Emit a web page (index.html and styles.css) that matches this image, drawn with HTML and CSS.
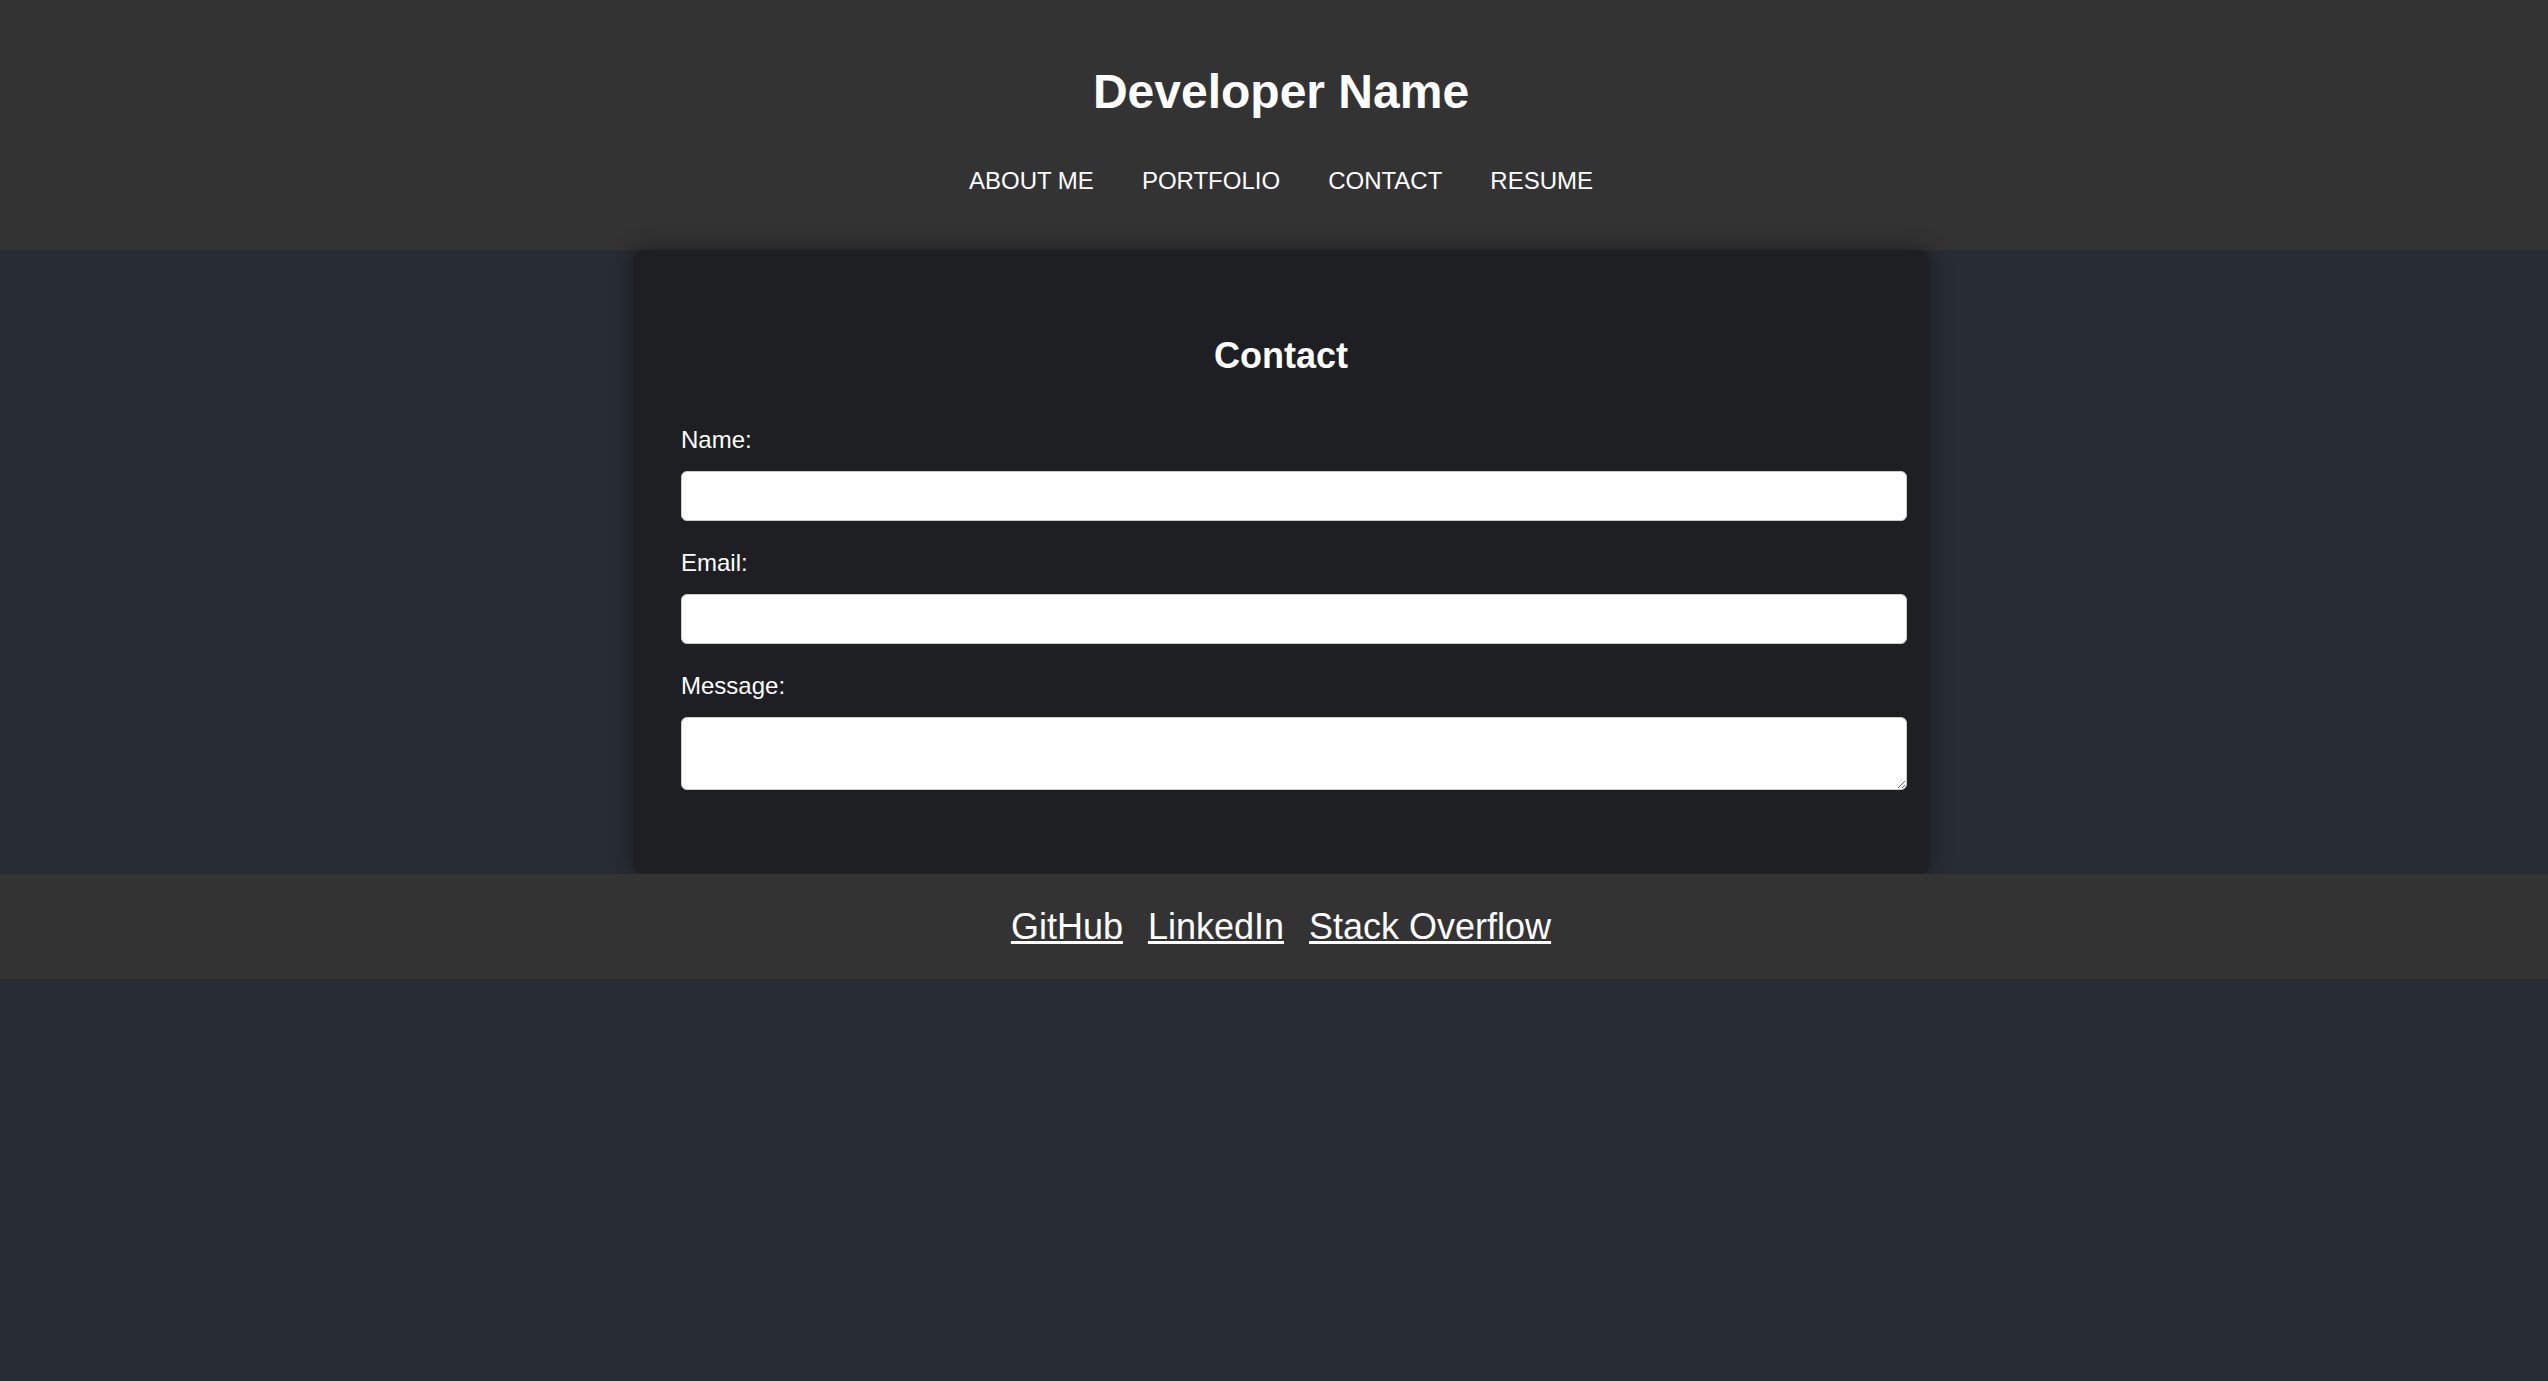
FILE: index.html
```html
<!DOCTYPE html>
<html lang="en">
<head>
<meta charset="utf-8">
<title>Developer Name</title>
<link rel="stylesheet" href="styles.css">
</head>
<body>
<header class="site-header">
  <h1 class="site-title">Developer Name</h1>
  <nav class="site-nav">
    <a href="#" class="nav-link">ABOUT ME</a>
    <a href="#" class="nav-link">PORTFOLIO</a>
    <a href="#" class="nav-link">CONTACT</a>
    <a href="#" class="nav-link">RESUME</a>
  </nav>
</header>
<main class="site-main">
  <section class="card">
    <h2 class="card-title">Contact</h2>
    <form class="contact-form">
      <label class="field-label" for="name">Name:</label>
      <input class="field-input" type="text" id="name">
      <label class="field-label" for="email">Email:</label>
      <input class="field-input" type="email" id="email">
      <label class="field-label" for="message">Message:</label>
      <textarea class="field-input field-textarea" id="message"></textarea>
    </form>
  </section>
</main>
<footer class="site-footer">
  <a href="#" class="footer-link">GitHub</a>
  <a href="#" class="footer-link">LinkedIn</a>
  <a href="#" class="footer-link">Stack Overflow</a>
</footer>
</body>
</html>
```
FILE: styles.css
```css
html, body {
  margin: 0;
  padding: 0;
}
body {
  background: #282c34;
  color: #ffffff;
  font-family: "Liberation Sans", Arial, sans-serif;
  min-height: 100vh;
}
.site-header {
  background: #333333;
  padding: 64px 0 55px 14px;
  text-align: center;
}
.site-title {
  margin: 0 0 48px;
  font-size: 48px;
  font-weight: bold;
  line-height: normal;
}
.site-nav {
  display: flex;
  justify-content: center;
  font-size: 24px;
}
.nav-link {
  color: #ffffff;
  text-decoration: none;
  padding: 0 24px;
}
.site-main {
  padding-left: 14px;
}
.card {
  position: relative;
  width: 1200px;
  margin: 0 auto;
  padding: 85px 48px 84px;
  background: #1e1f22;
  border-radius: 10px;
  box-shadow: 0 0 22px rgba(0, 0, 0, 0.45);
}
.card-title {
  margin: 0 0 49px;
  text-align: center;
  font-size: 36px;
  font-weight: bold;
  line-height: normal;
}
.contact-form {
  display: flex;
  flex-direction: column;
  align-items: flex-start;
}
.field-label {
  display: block;
  font-size: 24px;
  margin-bottom: 17px;
}
.field-input {
  display: block;
  box-sizing: content-box;
  width: 100%;
  height: 24px;
  padding: 12px;
  margin: 0 0 28px;
  border: 1px solid #cccccc;
  border-radius: 6px;
  background: #ffffff;
  font-family: "Liberation Sans", Arial, sans-serif;
  font-size: 16px;
  outline: none;
}
.field-textarea {
  height: 47px;
  margin-bottom: 0;
  resize: vertical;
}
.site-footer {
  position: relative;
  background: #333333;
  padding: 32px 0 31px 14px;
  display: flex;
  justify-content: center;
  gap: 25px;
  font-size: 36px;
  line-height: normal;
}
.footer-link {
  color: #ffffff;
  text-decoration: underline;
}
```
